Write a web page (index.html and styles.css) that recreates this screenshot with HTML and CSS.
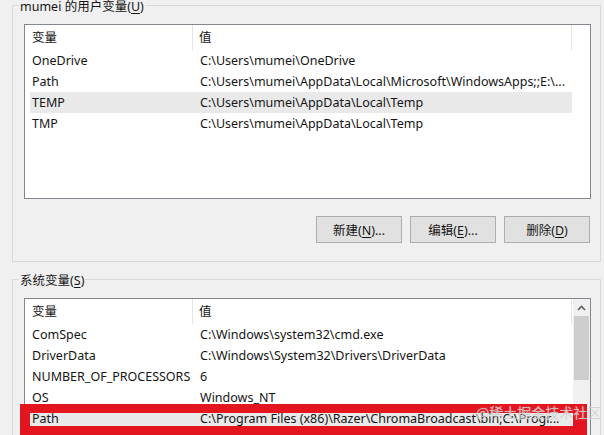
FILE: index.html
```html
<!DOCTYPE html>
<html lang="zh-CN">
<head>
<meta charset="utf-8">
<title>环境变量</title>
<link rel="stylesheet" href="styles.css">
</head>
<body>
<div class="window">
  <fieldset class="group group-user">
    <legend class="group-title">mumei 的用户变量(<u>U</u>)</legend>
    <div class="list list-user">
      <div class="list-main">
        <div class="list-head">
          <div class="hcol hcol-name">变量</div>
          <div class="hcol hcol-value">值</div>
        </div>
        <div class="row"><div class="cell cell-name">OneDrive</div><div class="cell cell-value">C:\Users\mumei\OneDrive</div></div>
        <div class="row"><div class="cell cell-name">Path</div><div class="cell cell-value">C:\Users\mumei\AppData\Local\Microsoft\WindowsApps;;E:\...</div></div>
        <div class="row row-selected"><div class="cell cell-name">TEMP</div><div class="cell cell-value">C:\Users\mumei\AppData\Local\Temp</div></div>
        <div class="row"><div class="cell cell-name">TMP</div><div class="cell cell-value">C:\Users\mumei\AppData\Local\Temp</div></div>
      </div>
    </div>
    <div class="buttons">
      <button class="btn">新建(<u>N</u>)...</button>
      <button class="btn">编辑(<u>E</u>)...</button>
      <button class="btn">删除(<u>D</u>)</button>
    </div>
  </fieldset>

  <fieldset class="group group-system">
    <legend class="group-title">系统变量(<u>S</u>)</legend>
    <div class="list list-system">
      <div class="list-main">
        <div class="list-head">
          <div class="hcol hcol-name">变量</div>
          <div class="hcol hcol-value">值</div>
        </div>
        <div class="row"><div class="cell cell-name">ComSpec</div><div class="cell cell-value">C:\Windows\system32\cmd.exe</div></div>
        <div class="row"><div class="cell cell-name">DriverData</div><div class="cell cell-value">C:\Windows\System32\Drivers\DriverData</div></div>
        <div class="row"><div class="cell cell-name">NUMBER_OF_PROCESSORS</div><div class="cell cell-value">6</div></div>
        <div class="row"><div class="cell cell-name">OS</div><div class="cell cell-value">Windows_NT</div></div>
        <div class="row row-selected"><div class="cell cell-name">Path</div><div class="cell cell-value">C:\Program Files (x86)\Razer\ChromaBroadcast\bin;C:\Progr...</div></div>
        <div class="row"><div class="cell cell-name">PATHEXT</div><div class="cell cell-value">.COM;.EXE;.BAT;.CMD;.VBS;.VBE;.JS;.JSE;.WSF;.WSH;.MSC</div></div>
      </div>
      <div class="scrollbar">
        <div class="sb-up">
          <svg width="9" height="6" viewBox="0 0 9 6"><polyline points="1,5 4.5,1.5 8,5" fill="none" stroke="#606060" stroke-width="1.6"/></svg>
        </div>
        <div class="sb-thumb"></div>
      </div>
    </div>
  </fieldset>

  <div class="annotation"></div>
  <div class="watermark">@稀土掘金技术社区</div>
</div>
</body>
</html>
```

FILE: styles.css
```css
html, body {
  margin: 0;
  padding: 0;
  overflow: hidden;
  background: #f0f0f0;
}

.window {
  position: relative;
  width: 604px;
  height: 435px;
  overflow: hidden;
  font-family: "Noto Sans", "Noto Sans CJK SC", sans-serif;
  font-size: 12.5px;
  color: #151515;
}

.group {
  box-sizing: border-box;
  width: 589px;
  margin: 0 0 0 12px;
  padding: 11px 9px 18px 11px;
  border: 1px solid #d9d9d9;
  min-width: 0;
}

.group-user {
  margin-top: -3px;
}

.group-system {
  margin-top: 9px;
}

.group-title {
  padding: 0 1px;
  margin-left: -5px;
  line-height: 19px;
  height: 16px;
  color: #151515;
}

.group-title u,
.btn u {
  text-decoration: underline;
  text-underline-offset: 2px;
}

.list {
  box-sizing: border-box;
  width: 567px;
  border: 1px solid #828790;
  background: #fff;
  display: flex;
}

.list-user {
  height: 175px;
}

.list-system {
  height: 200px;
}

.list-main {
  flex: 1;
  min-width: 0;
}

.list-head {
  display: flex;
  height: 25px;
}

.hcol {
  box-sizing: border-box;
  height: 25px;
  line-height: 25px;
  border-right: 1px solid #e5e5e5;
}

.hcol-name {
  width: 168px;
  padding-left: 7px;
}

.hcol-value {
  width: 379px;
  padding-left: 6px;
}

.row {
  display: flex;
  margin-left: 5px;
  width: 542px;
  height: 21px;
  line-height: 21px;
  white-space: nowrap;
}

.row-selected {
  background: #e9e9e9;
}

.cell {
  box-sizing: border-box;
  overflow: hidden;
}

.cell-name {
  width: 163px;
  padding-left: 2px;
}

.cell-value {
  flex: 1;
  padding-left: 7px;
}

.buttons {
  display: flex;
  justify-content: flex-end;
  gap: 8px;
  margin-top: 17px;
  padding-right: 1px;
}

.btn {
  box-sizing: border-box;
  width: 86px;
  height: 27px;
  margin: 0;
  padding: 0;
  border: 1px solid #adadad;
  background: #e1e1e1;
  font-family: inherit;
  font-size: 12.5px;
  color: #151515;
}

.scrollbar {
  width: 17px;
  background: #f0f0f0;
  display: flex;
  flex-direction: column;
  align-items: center;
}

.sb-up {
  height: 17px;
  width: 17px;
  display: flex;
  align-items: center;
  justify-content: center;
}

.sb-thumb {
  width: 15px;
  height: 64px;
  background: #cdcdcd;
}

.annotation {
  position: absolute;
  left: 20px;
  top: 404px;
  width: 567px;
  height: 33px;
  box-sizing: border-box;
  border-style: solid;
  border-color: #e3151e;
  border-width: 9px 14px 11px 10px;
}

.watermark {
  position: absolute;
  left: 476px;
  top: 403px;
  font-family: "Noto Sans CJK SC", sans-serif;
  font-size: 14px;
  line-height: 18px;
  color: rgba(200, 200, 200, 0.8);
  text-shadow: 0 0 1px rgba(255, 255, 255, 0.6);
  white-space: nowrap;
}
```
